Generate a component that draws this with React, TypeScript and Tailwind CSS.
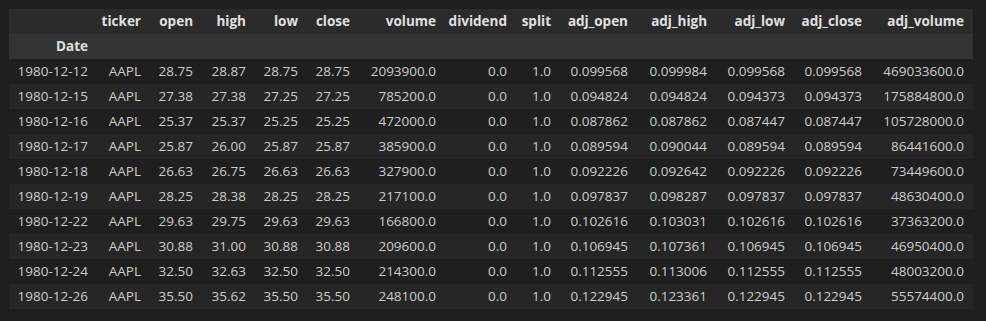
const columns = [
  { key: 'ticker', w: 53 },
  { key: 'open', w: 52 },
  { key: 'high', w: 53 },
  { key: 'low', w: 52 },
  { key: 'close', w: 52 },
  { key: 'volume', w: 86 },
  { key: 'dividend', w: 71 },
  { key: 'split', w: 44 },
  { key: 'adj_open', w: 77 },
  { key: 'adj_high', w: 79 },
  { key: 'adj_low', w: 78 },
  { key: 'adj_close', w: 77 },
  { key: 'adj_volume', w: 102 },
];

const rows: string[][] = [
  ['1980-12-12', 'AAPL', '28.75', '28.87', '28.75', '28.75', '2093900.0', '0.0', '1.0', '0.099568', '0.099984', '0.099568', '0.099568', '469033600.0'],
  ['1980-12-15', 'AAPL', '27.38', '27.38', '27.25', '27.25', '785200.0', '0.0', '1.0', '0.094824', '0.094824', '0.094373', '0.094373', '175884800.0'],
  ['1980-12-16', 'AAPL', '25.37', '25.37', '25.25', '25.25', '472000.0', '0.0', '1.0', '0.087862', '0.087862', '0.087447', '0.087447', '105728000.0'],
  ['1980-12-17', 'AAPL', '25.87', '26.00', '25.87', '25.87', '385900.0', '0.0', '1.0', '0.089594', '0.090044', '0.089594', '0.089594', '86441600.0'],
  ['1980-12-18', 'AAPL', '26.63', '26.75', '26.63', '26.63', '327900.0', '0.0', '1.0', '0.092226', '0.092642', '0.092226', '0.092226', '73449600.0'],
  ['1980-12-19', 'AAPL', '28.25', '28.38', '28.25', '28.25', '217100.0', '0.0', '1.0', '0.097837', '0.098287', '0.097837', '0.097837', '48630400.0'],
  ['1980-12-22', 'AAPL', '29.63', '29.75', '29.63', '29.63', '166800.0', '0.0', '1.0', '0.102616', '0.103031', '0.102616', '0.102616', '37363200.0'],
  ['1980-12-23', 'AAPL', '30.88', '31.00', '30.88', '30.88', '209600.0', '0.0', '1.0', '0.106945', '0.107361', '0.106945', '0.106945', '46950400.0'],
  ['1980-12-24', 'AAPL', '32.50', '32.63', '32.50', '32.50', '214300.0', '0.0', '1.0', '0.112555', '0.113006', '0.112555', '0.112555', '48003200.0'],
  ['1980-12-26', 'AAPL', '35.50', '35.62', '35.50', '35.50', '248100.0', '0.0', '1.0', '0.122945', '0.123361', '0.122945', '0.122945', '55574400.0'],
];

export default function App() {
  return (
    <div className="w-[986px] h-[321px] bg-[#1f1f1f] p-[9px] font-['Open_Sans',sans-serif] text-[13.5px]">
      <table className="table-fixed border-collapse w-[964px]">
        <colgroup>
          <col style={{ width: 88 }} />
          {columns.map((c) => (
            <col key={c.key} style={{ width: c.w }} />
          ))}
        </colgroup>
        <thead>
          {/* column names */}
          <tr className="h-[25px] bg-[#2b2b2b]">
            <th />
            {columns.map((c) => (
              <th key={c.key} className="text-right font-bold text-[#e0e0e0] pr-[9px] p-0 leading-none whitespace-nowrap">
                {c.key}
              </th>
            ))}
          </tr>
          {/* index name */}
          <tr className="h-[25px] bg-[#333333]">
            <th className="text-right font-bold text-[#e0e0e0] pr-[9px] leading-none">Date</th>
            {columns.map((c) => (
              <th key={c.key} />
            ))}
          </tr>
        </thead>
        <tbody>
          {rows.map((r, i) => (
            <tr key={r[0]} className={i % 2 === 1 ? 'h-[25px] bg-[#262626]' : 'h-[25px]'}>
              {r.map((v, j) => (
                <td key={j} className="text-right text-[#cccccc] pr-[9px] leading-none whitespace-nowrap">
                  {v}
                </td>
              ))}
            </tr>
          ))}
        </tbody>
      </table>
    </div>
  );
}
